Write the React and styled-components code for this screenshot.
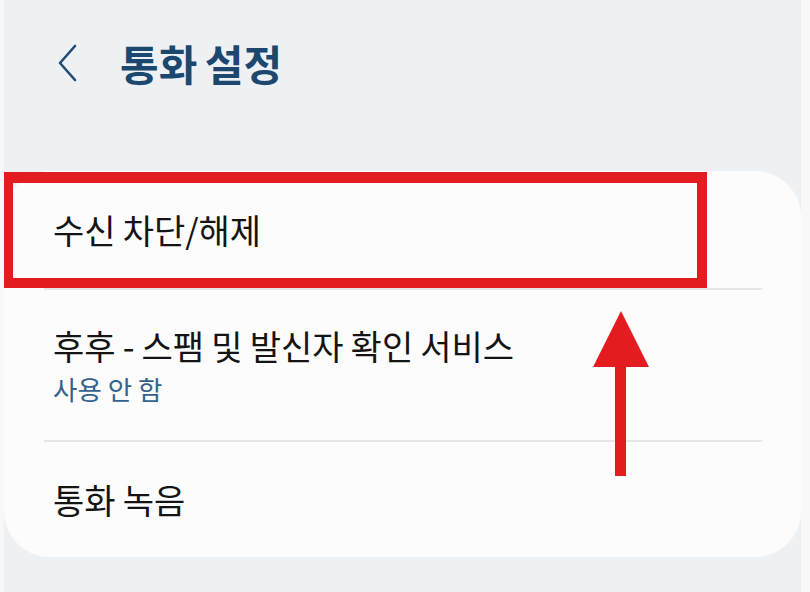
import React from 'react';
import styled, { createGlobalStyle } from 'styled-components';

const GlobalStyle = createGlobalStyle`
    html, body {
        margin: 0;
        padding: 0;
        background: #f8f8f8;
    }
    body {
        font-family: "Noto Sans CJK KR", "Noto Sans", sans-serif;
    }
`

const Screen = styled.div`
    position: relative;
    margin-left: 4px;
    width: 797px;
    height: 592px;
    background: #eef1f4;
    overflow: hidden;
`

const Header = styled.header`
    display: flex;
    align-items: center;
    gap: 43px;
    height: 46px;
    padding: 40px 0 0 53px;
    margin-bottom: 85px;
`

const BackButton = styled.button`
    display: flex;
    align-items: center;
    padding: 0;
    border: none;
    background: none;
    width: 20px;
`

const Title = styled.h1`
    margin: 0;
    font-size: 42px;
    line-height: 46px;
    font-weight: 700;
    color: #1c4870;
    word-spacing: -2px;
`

const Card = styled.section`
    background: #fcfcfc;
    border-radius: 46px;
    padding: 0 39px 0 40px;
`

const Row = styled.div`
    display: flex;
    flex-direction: column;
    justify-content: center;
    gap: 4px;
    height: ${({ height }) => height}px;
    padding-left: 9px;
    border-bottom: ${({ last }) => (last ? 'none' : '2px solid #e6e6e6')};
`

const Label = styled.div`
    font-size: 34px;
    line-height: 44px;
    color: #141414;
    word-spacing: -0.5px;
`

const Sub = styled.div`
    font-size: 26.5px;
    line-height: 34px;
    color: #33628f;
`

const Highlight = styled.div`
    position: absolute;
    left: -1px;
    top: 172px;
    width: 704px;
    height: 116px;
    box-sizing: border-box;
    border: 10px solid #e31c1f;
    border-top-width: 11px;
`

const Arrow = styled.svg`
    position: absolute;
    left: 589px;
    top: 311px;
`

const App = () => (
    <>
        <GlobalStyle />
        <Screen>
            <Header>
                <BackButton aria-label="뒤로">
                    <svg width="20" height="38" viewBox="0 0 20 38">
                        <path d="M18 2 L3 19 L18 36" fill="none" stroke="#1f4b74" strokeWidth="2.6" strokeLinecap="round" strokeLinejoin="round" />
                    </svg>
                </BackButton>
                <Title>통화 설정</Title>
            </Header>
            <Card>
                <Row height={117}>
                    <Label>수신 차단/해제</Label>
                </Row>
                <Row height={150}>
                    <Label>후후 - 스팸 및 발신자 확인 서비스</Label>
                    <Sub>사용 안 함</Sub>
                </Row>
                <Row height={115} last>
                    <Label>통화 녹음</Label>
                </Row>
            </Card>
            <Highlight />
            <Arrow width="56" height="166" viewBox="0 0 56 166">
                <polygon points="28,0 56,56 0,56" fill="#e31c1f" />
                <rect x="22" y="55" width="11" height="110" fill="#e31c1f" />
            </Arrow>
        </Screen>
    </>
)

export default App
